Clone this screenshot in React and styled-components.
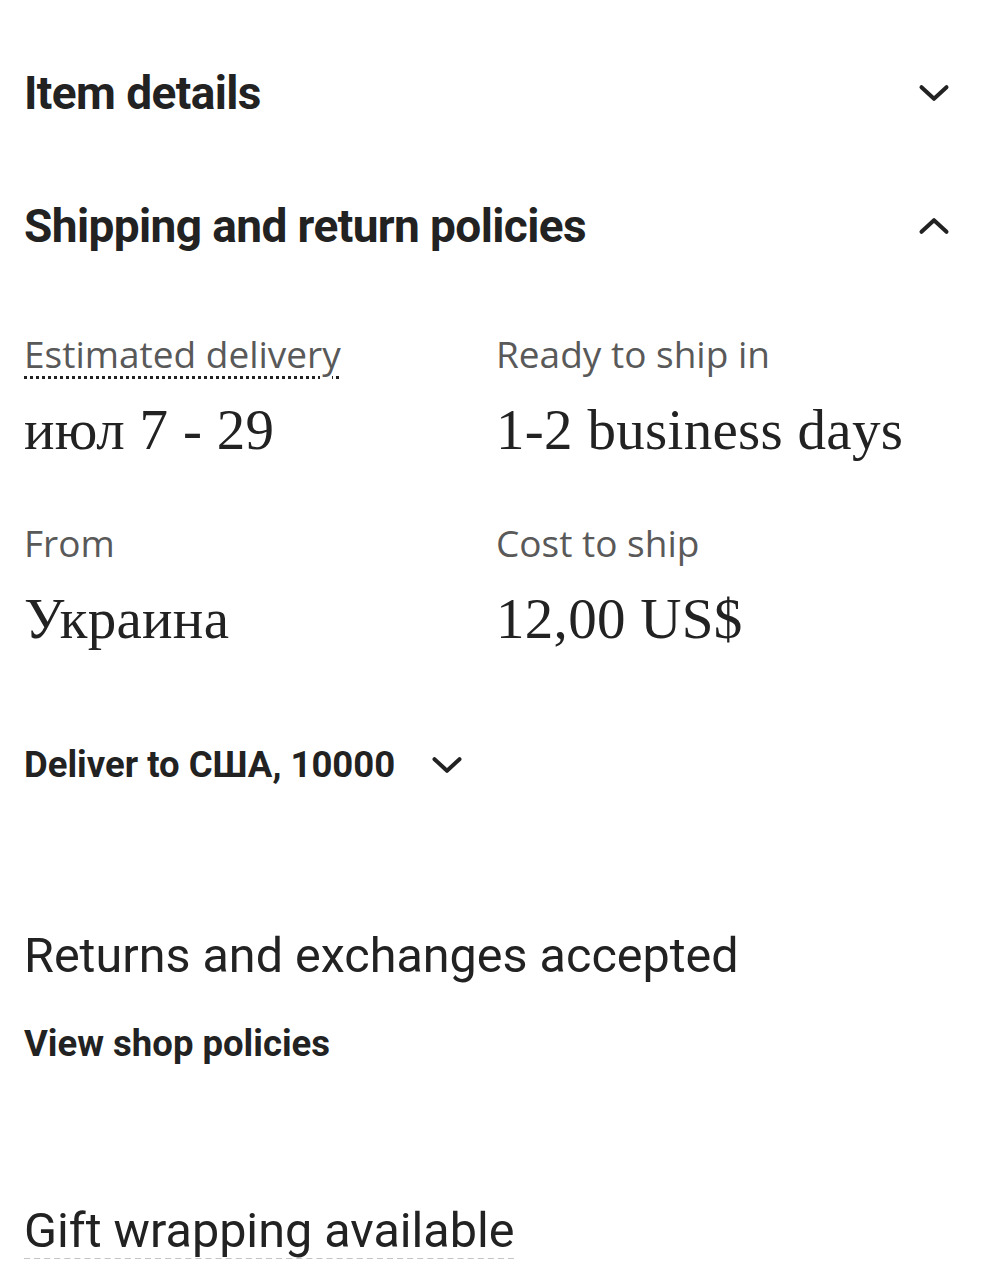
import React from 'react';
import styled, { createGlobalStyle } from 'styled-components';

const GlobalStyle = createGlobalStyle`
  body {
    margin: 0;
    background: #fff;
    color: #222;
    font-family: Roboto, "Noto Sans", sans-serif;
  }
`;

const Page = styled.div`
  width: 990px;
  padding: 0 24px;
  box-sizing: border-box;
`;

const SectionHead = styled.div`
  display: flex;
  align-items: center;
  justify-content: space-between;
  height: ${({ h }) => h}px;
  padding-right: 12px;
`;

const Heading = styled.h2`
  margin: 0;
  font-family: Roboto, sans-serif;
  font-weight: 700;
  font-size: 46px;
  letter-spacing: -0.6px;
  color: #222;
`;

const Chevron = ({ up, size = 40 }) => (
  <svg width={size} height={size} viewBox="0 0 24 24" fill="none">
    <path
      d={up ? 'M4.5 15.5 12 8.5l7.5 7' : 'M4.5 8.5 12 15.5l7.5-7'}
      stroke="#222"
      strokeWidth="2.4"
      strokeLinecap="round"
      strokeLinejoin="round"
    />
  </svg>
);

const Grid = styled.div`
  display: grid;
  grid-template-columns: 472px 1fr;
  row-gap: 59px;
  margin-top: 66px;
`;

const Cell = styled.div`
  display: flex;
  flex-direction: column;
  gap: 22px;
`;

const Label = styled.span`
  font-family: "Open Sans", sans-serif;
  font-size: 37px;
  line-height: 44px;
  color: #595959;
  align-self: flex-start;
  ${({ dotted }) =>
    dotted &&
    `
    text-decoration: underline dotted #222;
    text-decoration-thickness: 3px;
    text-underline-offset: 8px;
  `}
`;

const Value = styled.span`
  font-family: "Liberation Serif", serif;
  font-size: 57px;
  line-height: 64px;
  letter-spacing: 0.3px;
  color: #222;
`;

const DeliverRow = styled.button`
  display: flex;
  align-items: center;
  gap: 32px;
  height: 44px;
  margin-top: 92px;
  padding: 0;
  border: none;
  background: none;
  font-family: Roboto, sans-serif;
  font-weight: 700;
  font-size: 36.5px;
  line-height: 44px;
  color: #222;
  cursor: pointer;
`;

const Returns = styled.p`
  margin: 141px 0 0;
  font-family: Roboto, sans-serif;
  font-size: 48.5px;
  line-height: 56px;
  color: #222;
`;

const PolicyLink = styled.a`
  display: block;
  margin-top: 38px;
  font-family: Roboto, sans-serif;
  font-weight: 700;
  font-size: 36.5px;
  line-height: 44px;
  color: #222;
`;

const GiftRow = styled.div`
  margin-top: 137px;
  font-family: Roboto, sans-serif;
  font-size: 48.5px;
  line-height: 56px;
  color: #222;
`;

const Gift = styled.span`
  text-decoration: underline dashed #c4c4c4;
  text-decoration-thickness: 2px;
  text-underline-offset: 11px;
`;

export default function App() {
  return (
    <>
      <GlobalStyle />
      <Page>
        <SectionHead h={186}>
          <Heading>Item details</Heading>
          <Chevron />
        </SectionHead>
        <SectionHead h={80}>
          <Heading>Shipping and return policies</Heading>
          <Chevron up />
        </SectionHead>
        <Grid>
          <Cell>
            <Label dotted>Estimated delivery</Label>
            <Value>июл 7 - 29</Value>
          </Cell>
          <Cell>
            <Label>Ready to ship in</Label>
            <Value>1-2 business days</Value>
          </Cell>
          <Cell>
            <Label>From</Label>
            <Value>Украина</Value>
          </Cell>
          <Cell>
            <Label>Cost to ship</Label>
            <Value>12,00 US$</Value>
          </Cell>
        </Grid>
        <DeliverRow>
          Deliver to США, 10000
          <Chevron />
        </DeliverRow>
        <Returns>Returns and exchanges accepted</Returns>
        <PolicyLink>View shop policies</PolicyLink>
        <GiftRow>
          <Gift>Gift wrapping available</Gift>
        </GiftRow>
      </Page>
    </>
  );
}
